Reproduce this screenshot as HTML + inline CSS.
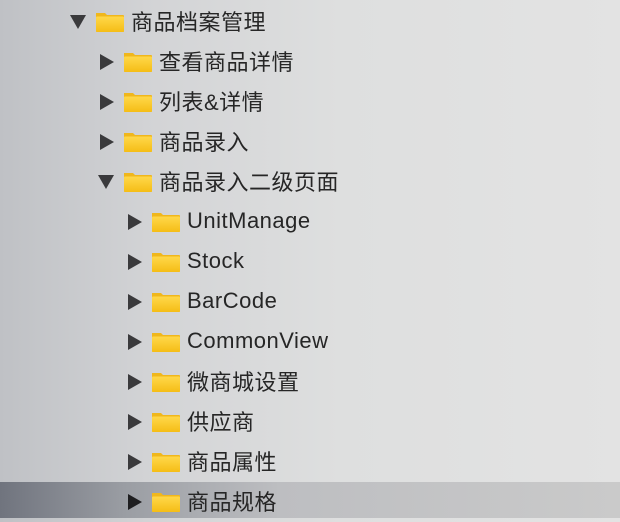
<!DOCTYPE html>
<html><head><style>
body{margin:0;width:620px;height:518px;overflow:hidden;position:relative;
background:linear-gradient(90deg,#bfc1c5 0%,#d3d4d6 25%,#dedfdf 55%,#e3e3e3 100%);
font-family:"Liberation Sans","Noto Sans CJK SC",sans-serif;}
.sel{position:absolute;left:0;top:482px;width:620px;height:36px;
background:linear-gradient(90deg,#70747e 0%,#9a9da3 20%,#bdbec1 45%,#cacaca 100%);}
.r{position:absolute;height:40px;display:flex;align-items:center;font-size:22px;color:#262626;letter-spacing:0.5px}
.r span.x{position:relative;top:-1px}
.t{width:0;height:0;border-style:solid;margin-right:11px}
.tr{border-width:8px 0 8px 14px;border-color:transparent transparent transparent #3a3a3c;margin-left:2px;margin-right:9px}
.td{border-width:14px 8px 0 8px;border-color:#3a3a3c transparent transparent transparent;margin-right:9px}
.f{width:30px;height:22px;position:relative;margin-right:6px}
</style></head><body>
<div class="sel"></div>
<svg width="0" height="0" style="position:absolute"><defs>
<linearGradient id="g" x1="0" y1="0" x2="0" y2="1"><stop offset="0" stop-color="#ffd84a"/><stop offset="1" stop-color="#f5bd16"/></linearGradient></defs></svg>
<div class="r" style="left:70px;top:2px"><span class="t td"></span><svg class="f" viewBox="0 0 30 22"><path d="M1 2h9l2 2h16a1 1 0 0 1 1 1v15a1 1 0 0 1-1 1H2a1 1 0 0 1-1-1z" fill="#f0b71c"/><rect x="1" y="5.5" width="28" height="15.5" rx="1" fill="url(#g)"/></svg><span class="x">商品档案管理</span></div>
<div class="r" style="left:98px;top:42px"><span class="t tr"></span><svg class="f" viewBox="0 0 30 22"><path d="M1 2h9l2 2h16a1 1 0 0 1 1 1v15a1 1 0 0 1-1 1H2a1 1 0 0 1-1-1z" fill="#f0b71c"/><rect x="1" y="5.5" width="28" height="15.5" rx="1" fill="url(#g)"/></svg><span class="x">查看商品详情</span></div>
<div class="r" style="left:98px;top:82px"><span class="t tr"></span><svg class="f" viewBox="0 0 30 22"><path d="M1 2h9l2 2h16a1 1 0 0 1 1 1v15a1 1 0 0 1-1 1H2a1 1 0 0 1-1-1z" fill="#f0b71c"/><rect x="1" y="5.5" width="28" height="15.5" rx="1" fill="url(#g)"/></svg><span class="x">列表&amp;详情</span></div>
<div class="r" style="left:98px;top:122px"><span class="t tr"></span><svg class="f" viewBox="0 0 30 22"><path d="M1 2h9l2 2h16a1 1 0 0 1 1 1v15a1 1 0 0 1-1 1H2a1 1 0 0 1-1-1z" fill="#f0b71c"/><rect x="1" y="5.5" width="28" height="15.5" rx="1" fill="url(#g)"/></svg><span class="x">商品录入</span></div>
<div class="r" style="left:98px;top:162px"><span class="t td"></span><svg class="f" viewBox="0 0 30 22"><path d="M1 2h9l2 2h16a1 1 0 0 1 1 1v15a1 1 0 0 1-1 1H2a1 1 0 0 1-1-1z" fill="#f0b71c"/><rect x="1" y="5.5" width="28" height="15.5" rx="1" fill="url(#g)"/></svg><span class="x">商品录入二级页面</span></div>
<div class="r" style="left:126px;top:202px"><span class="t tr"></span><svg class="f" viewBox="0 0 30 22"><path d="M1 2h9l2 2h16a1 1 0 0 1 1 1v15a1 1 0 0 1-1 1H2a1 1 0 0 1-1-1z" fill="#f0b71c"/><rect x="1" y="5.5" width="28" height="15.5" rx="1" fill="url(#g)"/></svg><span class="x">UnitManage</span></div>
<div class="r" style="left:126px;top:242px"><span class="t tr"></span><svg class="f" viewBox="0 0 30 22"><path d="M1 2h9l2 2h16a1 1 0 0 1 1 1v15a1 1 0 0 1-1 1H2a1 1 0 0 1-1-1z" fill="#f0b71c"/><rect x="1" y="5.5" width="28" height="15.5" rx="1" fill="url(#g)"/></svg><span class="x">Stock</span></div>
<div class="r" style="left:126px;top:282px"><span class="t tr"></span><svg class="f" viewBox="0 0 30 22"><path d="M1 2h9l2 2h16a1 1 0 0 1 1 1v15a1 1 0 0 1-1 1H2a1 1 0 0 1-1-1z" fill="#f0b71c"/><rect x="1" y="5.5" width="28" height="15.5" rx="1" fill="url(#g)"/></svg><span class="x">BarCode</span></div>
<div class="r" style="left:126px;top:322px"><span class="t tr"></span><svg class="f" viewBox="0 0 30 22"><path d="M1 2h9l2 2h16a1 1 0 0 1 1 1v15a1 1 0 0 1-1 1H2a1 1 0 0 1-1-1z" fill="#f0b71c"/><rect x="1" y="5.5" width="28" height="15.5" rx="1" fill="url(#g)"/></svg><span class="x">CommonView</span></div>
<div class="r" style="left:126px;top:362px"><span class="t tr"></span><svg class="f" viewBox="0 0 30 22"><path d="M1 2h9l2 2h16a1 1 0 0 1 1 1v15a1 1 0 0 1-1 1H2a1 1 0 0 1-1-1z" fill="#f0b71c"/><rect x="1" y="5.5" width="28" height="15.5" rx="1" fill="url(#g)"/></svg><span class="x">微商城设置</span></div>
<div class="r" style="left:126px;top:402px"><span class="t tr"></span><svg class="f" viewBox="0 0 30 22"><path d="M1 2h9l2 2h16a1 1 0 0 1 1 1v15a1 1 0 0 1-1 1H2a1 1 0 0 1-1-1z" fill="#f0b71c"/><rect x="1" y="5.5" width="28" height="15.5" rx="1" fill="url(#g)"/></svg><span class="x">供应商</span></div>
<div class="r" style="left:126px;top:442px"><span class="t tr"></span><svg class="f" viewBox="0 0 30 22"><path d="M1 2h9l2 2h16a1 1 0 0 1 1 1v15a1 1 0 0 1-1 1H2a1 1 0 0 1-1-1z" fill="#f0b71c"/><rect x="1" y="5.5" width="28" height="15.5" rx="1" fill="url(#g)"/></svg><span class="x">商品属性</span></div>
<div class="r" style="left:126px;top:482px"><span class="t tr" style="border-left-color:#1e1e20"></span><svg class="f" viewBox="0 0 30 22"><path d="M1 2h9l2 2h16a1 1 0 0 1 1 1v15a1 1 0 0 1-1 1H2a1 1 0 0 1-1-1z" fill="#f0b71c"/><rect x="1" y="5.5" width="28" height="15.5" rx="1" fill="url(#g)"/></svg><span class="x">商品规格</span></div>
</body></html>
